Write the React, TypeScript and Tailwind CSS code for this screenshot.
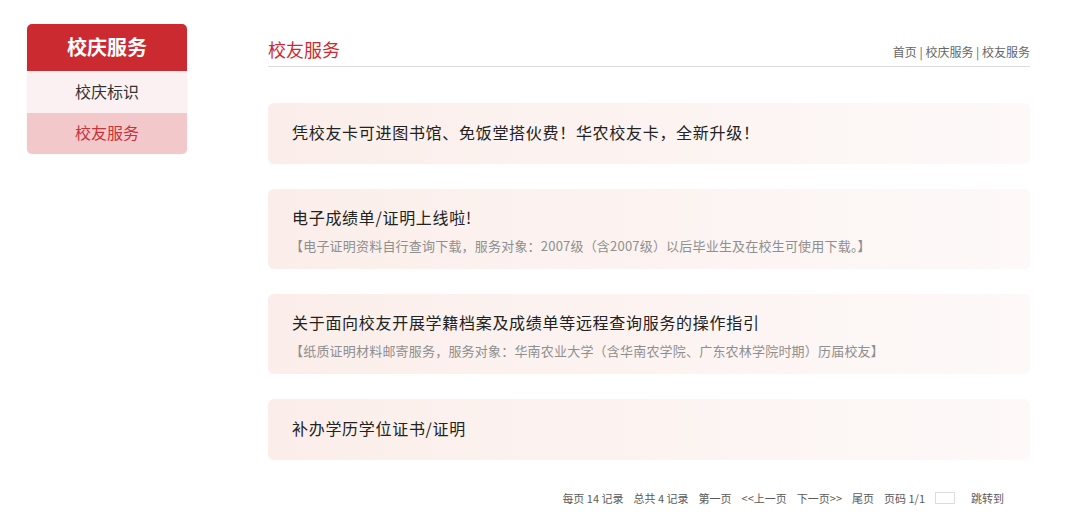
import React from "react";

const items = [
  { title: "凭校友卡可进图书馆、免饭堂搭伙费！华农校友卡，全新升级！", sub: "", h: "h-[61px]" },
  { title: "电子成绩单/证明上线啦!", sub: "【电子证明资料自行查询下载，服务对象：2007级（含2007级）以后毕业生及在校生可使用下载。】", h: "h-[80px]" },
  { title: "关于面向校友开展学籍档案及成绩单等远程查询服务的操作指引", sub: "【纸质证明材料邮寄服务，服务对象：华南农业大学（含华南农学院、广东农林学院时期）历届校友】", h: "h-[80px]" },
  { title: "补办学历学位证书/证明", sub: "", h: "h-[61px]" },
];

export default function App() {
  return (
    <div
      className="w-[1080px] h-[531px] bg-white flex overflow-hidden"
      style={{ fontFamily: '"Noto Sans CJK SC", "Noto Sans", sans-serif' }}
    >
      <div className="w-[160px] ml-[27px] mt-[24px] self-start rounded-[5px] overflow-hidden shadow-[0_0_2px_rgba(0,0,0,0.08)]">
        <div className="h-[47px] bg-[#cc2a31] text-white text-[20px] font-bold flex items-center justify-center pb-[1px]">校庆服务</div>
        <div className="h-[42px] bg-[#fbf1f2] text-[#333] text-[16px] flex items-center justify-center pb-[3px]">校庆标识</div>
        <div className="h-[41px] bg-[#f2c8ca] text-[#c8323a] text-[16px] flex items-center justify-center pb-[3px]">校友服务</div>
      </div>
      <div className="ml-[81px] w-[762px] flex flex-col">
        <div className="mt-[36px] h-[31px] flex items-end justify-between border-b border-[#dcdcdc]">
          <div className="text-[18px] leading-[24px] text-[#cc2a31] pb-[5px]">校友服务</div>
          <div className="text-[12px] leading-[16px] text-[#666] pb-[6px]">首页 | 校庆服务 | 校友服务</div>
        </div>
        <div className="mt-[36px] flex flex-col gap-[25px]">
          {items.map((it, i) => (
            <div
              key={i}
              className={`rounded-[6px] bg-gradient-to-r from-[#fbeeea] to-[#fdf9f8] px-[24px] flex flex-col justify-center ${it.h} ${it.sub ? "pt-[3px]" : "pb-[4px]"}`}
            >
              <div className="text-[16px] leading-[22px] text-[#222] tracking-[0.7px]">{it.title}</div>
              {it.sub && <div className="mt-[9px] text-[13px] leading-[18px] text-[#8f8f8f] tracking-[0.2px] -ml-[2px]">{it.sub}</div>}
            </div>
          ))}
        </div>
        <div className="mt-[30px] flex items-center justify-end pr-[26px] text-[11px] text-[#5a5a5a] gap-[10px]">
          <span>每页 14 记录</span>
          <span>总共 4 记录</span>
          <span>第一页</span>
          <span>&lt;&lt;上一页</span>
          <span>下一页&gt;&gt;</span>
          <span>尾页</span>
          <span>页码 1/1</span>
          <span className="w-[20px] h-[12px] border border-[#ddd] bg-white"></span>
          <span className="ml-[6px]">跳转到</span>
        </div>
      </div>
    </div>
  );
}
